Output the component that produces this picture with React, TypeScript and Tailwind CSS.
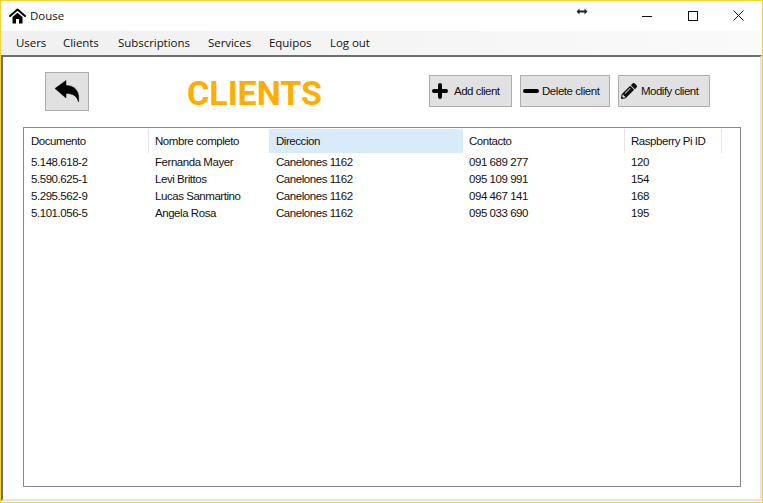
import React from 'react';
import { FaPencilAlt } from 'react-icons/fa';

const rows = [
    ['5.148.618-2', 'Fernanda Mayer', 'Canelones 1162', '091 689 277', '120'],
    ['5.590.625-1', 'Levi Brittos', 'Canelones 1162', '095 109 991', '154'],
    ['5.295.562-9', 'Lucas Sanmartino', 'Canelones 1162', '094 467 141', '168'],
    ['5.101.056-5', 'Angela Rosa', 'Canelones 1162', '095 033 690', '195'],
];

const menuItems = [
    { label: 'Users', cls: 'w-[47px]' },
    { label: 'Clients', cls: 'w-[55px]' },
    { label: 'Subscriptions', cls: 'w-[90px]' },
    { label: 'Services', cls: 'w-[61px]' },
    { label: 'Equipos', cls: 'w-[61px]' },
    { label: 'Log out', cls: 'w-[60px]' },
];

// column widths and left padding, same for header and rows
const colClasses = ['w-[125px] pl-[7px]', 'w-[120px] pl-[6px]', 'w-[194px] pl-[7px]', 'w-[162px] pl-[6px]', 'w-[97px] pl-[6px]'];

const headers = ['Documento', 'Nombre completo', 'Direccion', 'Contacto', 'Raspberry Pi ID'];

export default function App() {
    return (
        <div className="relative w-[763px] h-[503px] overflow-hidden bg-white border border-[#f5d33f] font-['Liberation_Sans',sans-serif] text-black">
            {/* Title bar */}
            <div className="h-[30px] flex items-center bg-white">
                <svg className="ml-[8px]" width="17" height="16" viewBox="0 0 17 16">
                    <path d="M1 8L8.5 1.5L16 8" fill="none" stroke="#000" strokeWidth="2" strokeLinecap="round" strokeLinejoin="round" />
                    <path d="M3.5 9L8.5 4.8L13.5 9V15.5H10V11H7V15.5H3.5Z" fill="#000" />
                </svg>
                <span className="ml-[4px] text-[11.5px] font-['Open_Sans',sans-serif] text-[#111]">Douse</span>
                <div className="ml-auto flex items-center h-full pb-[1px]">
                    <div className="w-[46px] flex justify-center">
                        <svg width="10" height="10" viewBox="0 0 10 10"><path d="M0 5.5h10" stroke="#111" strokeWidth="1" /></svg>
                    </div>
                    <div className="w-[46px] flex justify-center">
                        <svg width="10" height="10" viewBox="0 0 10 10"><rect x="0.5" y="0.5" width="9" height="9" fill="none" stroke="#111" strokeWidth="1" /></svg>
                    </div>
                    <div className="w-[46px] pr-[2px] flex justify-center">
                        <svg width="11" height="11" viewBox="0 0 11 11"><path d="M0.5 0.5l10 10M10.5 0.5l-10 10" stroke="#111" strokeWidth="1" /></svg>
                    </div>
                </div>
            </div>

            {/* Resize cursor caught in the screenshot */}
            <svg className="absolute left-[575px] top-[6px]" width="12" height="9" viewBox="0 0 12 9">
                <path d="M0.5 4.5L3.5 1.5V3.5H8.5V1.5L11.5 4.5L8.5 7.5V5.5H3.5V7.5Z" fill="#222" />
            </svg>

            {/* Menu */}
            <div className="h-[24px] flex items-center pl-[8px] bg-gradient-to-r from-[#f0f0f0] to-[#fafafa] font-['Open_Sans',sans-serif] text-[11.5px] tracking-[-0.05px] text-[#111]">
                {menuItems.map((m) => (
                    <span key={m.label} className={`${m.cls} pl-[7px] whitespace-nowrap`}>{m.label}</span>
                ))}
            </div>

            {/* Client panel */}
            <div className="h-[446px] border-t-2 border-l-2 border-t-[#6e6e6e] border-l-[#6e6e6e] border-r-2 border-b-2 border-r-[#e3e3e3] border-b-[#e3e3e3] bg-white">
                <div className="h-[70px] flex items-start pl-[42px]">
                    <button className="mt-[15px] w-[44px] h-[39px] flex items-center justify-center bg-[#e1e1e1] border border-[#adadad]">
                        <svg width="26" height="23" viewBox="0 0 26 23">
                            <path d="M1 8.5L12 0.5V5.5C20 5.5 26 10 24.5 22C23 16 19 13.5 12 13.5V18Z" fill="#000" stroke="#000" strokeWidth="0.5" strokeLinejoin="round" />
                        </svg>
                    </button>
                    <h1 className="ml-[98px] mt-[14px] w-[242px] text-[34px] leading-[44px] font-bold text-[#ffae00] font-['Roboto',sans-serif]">CLIENTS</h1>
                    <button className="mt-[18px] w-[83px] h-[32px] flex items-center pl-[2px] bg-[#e1e1e1] border border-[#adadad] text-[11.5px] tracking-[-0.5px] text-[#111] whitespace-nowrap">
                        <svg className="shrink-0" width="16" height="16" viewBox="0 0 16 16">
                            <path d="M8 2V14M2 8H14" stroke="#000" strokeWidth="4" strokeLinecap="round" />
                        </svg>
                        <span className="ml-[6px] pt-[1px]">Add client</span>
                    </button>
                    <button className="ml-[8px] mt-[18px] w-[90px] h-[32px] flex items-center pl-[2px] bg-[#e1e1e1] border border-[#adadad] text-[11.5px] tracking-[-0.45px] text-[#111] whitespace-nowrap">
                        <svg className="shrink-0" width="16" height="16" viewBox="0 0 16 16">
                            <path d="M2 8H14" stroke="#000" strokeWidth="4" strokeLinecap="round" />
                        </svg>
                        <span className="ml-[3px] pt-[1px]">Delete client</span>
                    </button>
                    <button className="ml-[8px] mt-[18px] w-[92px] h-[32px] flex items-center pl-[2px] bg-[#e1e1e1] border border-[#adadad] text-[11.5px] tracking-[-0.5px] text-[#111] whitespace-nowrap">
                        <FaPencilAlt className="text-[16px] shrink-0" />
                        <span className="ml-[4px] pt-[1px]">Modify client</span>
                    </button>
                </div>

                {/* Table */}
                <div className="ml-[20px] w-[718px] h-[360px] border border-[#828790] pt-[1px] text-[11.5px] tracking-[-0.45px] text-[#111]">
                    <div className="flex h-[24px]">
                        {headers.map((h, i) => (
                            <div
                                key={h}
                                className={`${colClasses[i]} pt-[2px] flex items-center shrink-0 border-r whitespace-nowrap ${i === 2 ? 'bg-[#d9ebf9] border-r-[#d9ebf9]' : i === 1 ? 'border-r-transparent' : 'border-r-[#e5e5e5]'}`}
                            >
                                {h}
                            </div>
                        ))}
                    </div>
                    <div className="pt-[1px]">
                        {rows.map((r) => (
                            <div key={r[0]} className="flex h-[17px] items-center">
                                {r.map((c, i) => (
                                    <div key={i} className={`${colClasses[i]} shrink-0 whitespace-nowrap`}>{c}</div>
                                ))}
                            </div>
                        ))}
                    </div>
                </div>
            </div>
        </div>
    );
}
